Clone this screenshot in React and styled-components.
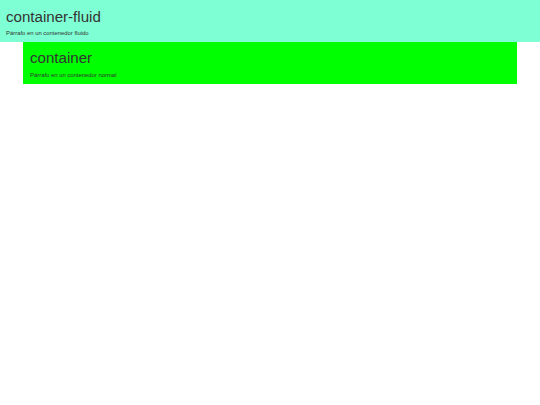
import React from "react";
import styled, { createGlobalStyle } from "styled-components";

const Global = createGlobalStyle`
  html, body { margin: 0; padding: 0; background: #fff; }
  body {
    font-family: "Liberation Sans", Arial, sans-serif;
    color: #333;
  }
`;

const Fluid = styled.div`
  display: flow-root;
  background: #7fffd4;
  padding: 0 6px;
`;

const Fixed = styled.div`
  display: flow-root;
  background: #00ff00;
  width: 494px;
  box-sizing: border-box;
  margin: 0 auto;
  padding: 0 7px 1px;
`;

const Title = styled.h1`
  margin: 8.5px 0 4px;
  font-size: 15.1px;
  line-height: 16.5px;
  font-weight: 500;
`;

const Text = styled.p`
  margin: 0 0 4.5px;
  font-size: 5.9px;
  line-height: 8px;
`;

export default function App() {
  return (
    <>
      <Global />
      <Fluid>
        <Title>container-fluid</Title>
        <Text>Párrafo en un contenedor fluido</Text>
      </Fluid>
      <Fixed>
        <Title>container</Title>
        <Text>Párrafo en un contenedor normal</Text>
      </Fixed>
    </>
  );
}
